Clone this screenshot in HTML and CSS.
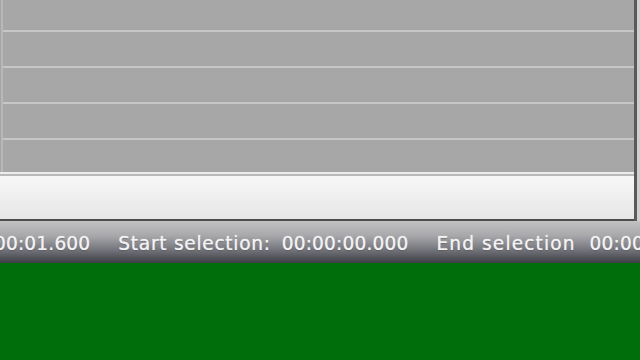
FILE: index.html
```html
<!DOCTYPE html>
<html>
<head>
<meta charset="utf-8">
<link rel="stylesheet" href="styles.css">
</head>
<body>
<div class="screen">
  <div class="upper">
    <div class="tracks">
      <div class="row"></div>
      <div class="row"></div>
      <div class="row"></div>
      <div class="row last"></div>
    </div>
    <div class="sep"></div>
    <div class="band"></div>
  </div>
  <div class="status">
    <span class="val first">00:01.600</span>
    <span class="lbl">Start selection:</span>
    <span class="val start">00:00:00.000</span>
    <span class="lbl endlbl">End selection</span>
    <span class="val end">00:00:00.000</span>
  </div>
  <div class="green"></div>
</div>
</body>
</html>
```
FILE: styles.css
```css
html, body {
  margin: 0;
  padding: 0;
  width: 640px;
  height: 360px;
  overflow: hidden;
  background: #006f0c;
}
.screen {
  display: flex;
  flex-direction: column;
  width: 640px;
  height: 360px;
  background: #cfcfcf;
}
.upper {
  display: flex;
  flex-direction: column;
  border-right: 3px solid #5a5a5a;
  margin-right: 3px;
  background: #a6a6a6;
}
.tracks {
  height: 172px;
  padding-top: 30px;
  box-sizing: border-box;
  background: #a7a7a7;
  border-left: 2px solid #b8b8b8;
  margin-left: 1px;
}
.row {
  height: 34px;
  border-top: 2px solid #c6c6c6;
}
.row.last {
  height: 32px;
}
.sep {
  height: 2px;
  background: #ececec;
  border-bottom: 2px solid #b9b9b9;
}
.band {
  height: 43px;
  background: linear-gradient(#f7f7f7, #ededed 60%, #e6e6e6);
  border-bottom: 2px solid #4c4c4c;
}
.status {
  height: 42px;
  box-sizing: border-box;
  padding-top: 3px;
  display: flex;
  align-items: center;
  gap: 28px;
  white-space: nowrap;
  overflow: hidden;
  background: linear-gradient(#c2c2c2 0%, #a8a8ab 35%, #7a7b81 65%, #3d3e45 100%);
  font-family: "DejaVu Sans", sans-serif;
  font-size: 18.6px;
  color: #f2f2f2;
  text-shadow: 0 0 1px rgba(255,255,255,0.8), 0 1px 1px rgba(50,50,55,0.5);
}
.val {
  letter-spacing: 0.15px;
}
.lbl {
  letter-spacing: 0.7px;
}
.lbl.endlbl {
  letter-spacing: 1.1px;
}
.val.first {
  margin-left: -6px;
}
.val.start {
  margin-left: -17px;
}
.val.end {
  margin-left: -14px;
}
.green {
  flex: 1;
  background: #006e0b;
}
```
